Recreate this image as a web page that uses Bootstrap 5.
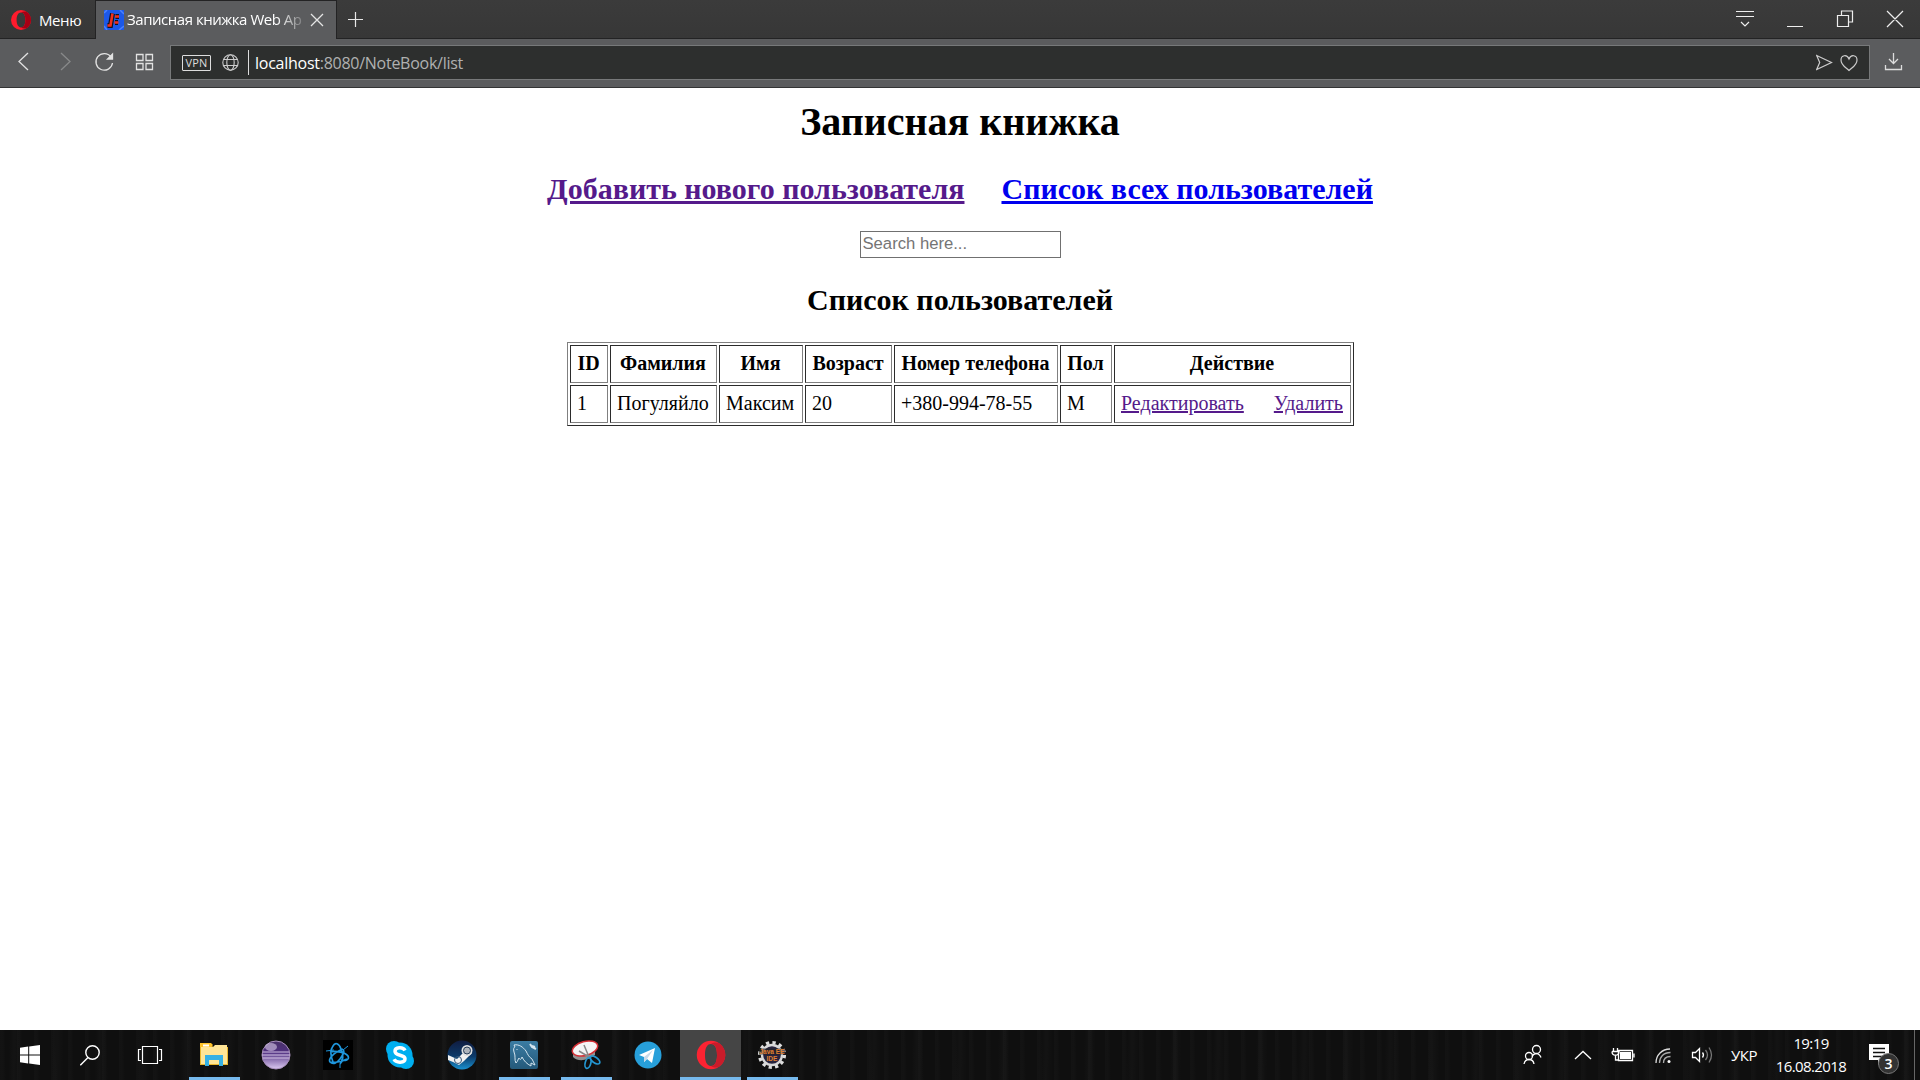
<!DOCTYPE html>
<html lang="ru">
<head>
<meta charset="utf-8">
<title>Записная книжка Web App</title>
<link href="https://cdn.jsdelivr.net/npm/bootstrap@5.3.0/dist/css/bootstrap.min.css" rel="stylesheet">
<style>
body{font-family:"Liberation Serif",serif;color:#000;background:#fff;font-size:20px;line-height:23px}
svg{display:block;flex:none}
.ui{font-family:"Open Sans",sans-serif}
.tabstrip{height:39px;background:linear-gradient(#3b3b3b,#373737);border-bottom:1px solid #232324}
.menu-btn{width:95px;padding-left:11px;color:#fff;font-size:15px}
.menu-btn span{margin:-2px 0 0 8px;letter-spacing:-.4px}
.tab-on{width:242px;background:#5b5c5e;border:1px solid #232324;border-bottom:0;padding-left:8px;color:#fff;font-size:15px;margin-bottom:-1px}
.tab-title{width:179px;margin:-2px 0 0 3px;letter-spacing:-.47px;white-space:nowrap;-webkit-mask-image:linear-gradient(90deg,#000 150px,transparent 182px);mask-image:linear-gradient(90deg,#000 150px,transparent 182px)}
.toolbar{height:49px;background:#5b5c5e;border-bottom:1px solid #333435}
.address{height:35px;margin:6px 0 0 24px;width:1700px;background:#2d2f2e;border:1px solid #77797a;padding-left:11px}
.vpn{width:29px;height:16px;border:1px solid #ddd;border-radius:1px;font-size:11px;line-height:14px;color:#ddd;text-align:center;letter-spacing:.2px}
.caret{width:1px;height:25px;background:#ddd;margin:0 6px 0 9px}
.url{font-size:16px;color:#b0b1b1;letter-spacing:-.26px;white-space:nowrap;padding-top:2px}
.url b{font-weight:400;color:#fff}
main{height:942px;padding-top:11px}
h1{font-size:40px;line-height:46px;font-weight:700;margin:0 0 27px}
h2{font-size:30px;line-height:34px;font-weight:700;margin:0}
.nav-links{gap:37px}
a.seen{color:#551a8b}a.fresh{color:#00e}
.search-field{width:201px;height:27px;border:1px solid #707070;margin:25px auto;padding:0 0 1px 2px;font:16.67px "Liberation Sans",sans-serif;display:block;border-radius:0}
.search-field::placeholder{color:#757575;opacity:1}
.people{width:787px;margin-top:25px;border:1px solid;border-color:#808080 #2b2b2b #2b2b2b #808080;border-collapse:separate;border-spacing:2px;table-layout:fixed;text-align:left}
.people th,.people td{height:38px;padding:0 0 1px 6.500px;border:1px solid;border-color:#2b2b2b #808080 #808080 #2b2b2b;white-space:nowrap;vertical-align:middle}
.people th{padding:0 0 1px;text-align:center}
.people td a+a{margin-left:30px}
.taskbar{height:50px;color:#fff;background-color:#0f0f0f;background-image:repeating-linear-gradient(90.500deg,transparent 0 9px,rgba(255,255,255,.02) 14px,transparent 21px 43px),repeating-linear-gradient(89.500deg,rgba(255,255,255,.015) 0 3px,transparent 6px 17px)}
.sys{width:60px}.app{width:62px;height:50px;position:relative}
.run::after{content:"";position:absolute;bottom:0;left:6px;width:51px;height:3px;background:#76b9ed}
.active-app{background:#454545;width:61px;margin-left:1px}
.active-app::after{left:0;width:61px}
.tray{position:relative}
.clock{font-size:15px;line-height:23px;letter-spacing:-.6px;width:74px;text-align:center}
.count{position:absolute;left:9px;top:9px;width:21px;height:21px;border-radius:50%;border:1px solid #777;background:#333;font-size:14px;font-weight:600;line-height:19px;text-align:center}
</style>
<script src="https://cdn.jsdelivr.net/npm/bootstrap@5.3.0/dist/js/bootstrap.bundle.min.js"></script>
</head>
<body class="overflow-hidden">
<header class="ui">
<div class="tabstrip d-flex">
 <div class="menu-btn d-flex align-items-center pt-1"><svg style="margin-top:-2px" width="20" height="20" viewBox="0 0 20 20"><path fill="#ff1b2d" fill-rule="evenodd" d="M10 0a10 10 0 1 0 0 20 10 10 0 0 0 0-20m0 2.600c3 0 4.400 3.400 4.400 7.400S13 17.400 10 17.400 5.600 14 5.600 10 7 2.600 10 2.600"/><path fill="#a70014" d="M10 2.600c2-1.300 4-1.300 6-.6a10 10 0 0 1 0 16c-2 .8-4 .7-6-.6 3 0 4.400-3.400 4.400-7.400S13 2.600 10 2.600"/></svg><span>Меню</span></div>
 <div class="tab-on d-flex align-items-center">
  <svg width="20" height="20" style="margin-top:-1px"><path fill="#1c58e8" d="M0 0h20v20H0z"/><path d="M0 3l3-3M0 16l3 4M16 0l4 4M15 20l5-4" stroke="#4b82ff" stroke-width="1.500"/><path d="M8.500 3.500 6.500 15.500H3.500M11.500 6.500H15M11 12.500h3" fill="none" stroke="#10131f" stroke-width="5"/><path d="M8.500 3.500 6.500 15.500H3.500" fill="none" stroke="#f2301c" stroke-width="2.600"/><path d="M11 6.500h4M10.500 12.500h4" stroke="#f2301c" stroke-width="2.600"/></svg>
  <div class="tab-title">Записная книжка Web Ap</div>
  <svg class="ms-1" style="margin-top:-1px" width="14" height="14" stroke="#e5e5e5" stroke-width="1.300"><path d="M1 1l12 12M13 1 1 13"/></svg>
 </div>
 <svg class="ms-2 mt-2" width="30" height="24" stroke="#e8e8e8" stroke-width="1.200"><path d="M10.500 4v15M3 11.500h15"/></svg>
 <svg class="ms-auto" width="190" height="38" fill="none" stroke="#eee" stroke-width="1.200"><path d="M6 11.500h18M6 16.500h18M11 22l4 4 4-4M57 26.500h16M107.500 15.500h11v11h-11zM111.500 15v-4h11v11h-4M157 11l16 16M173 11l-16 16"/></svg>
</div>
<div class="toolbar d-flex">
 <svg width="146" height="48" class="overflow-visible" fill="none" stroke="#e2e2e2" stroke-width="1.300"><path d="M28 14l-9 8.500 9 8.500"/><path stroke="#88898a" d="M61 14l9 8.500-9 8.500"/><path d="M111 18a8.300 8.300 0 1 0 1.500 6"/><path fill="#e2e2e2" d="M112.500 15v5h-5z"/><path d="M136.500 15.500h6.500v6h-6.500zM146 15.500h6.500v6H146zM136.500 24.500h6.500v6h-6.500zM146 24.500h6.500v6H146z"/></svg>
 <div class="address d-flex align-items-center">
  <div class="vpn">VPN</div>
  <svg style="margin-left:11px" width="17" height="17" fill="none" stroke="#ccc" stroke-width="1.100"><circle cx="8.500" cy="8.500" r="7.700"/><ellipse cx="8.500" cy="8.500" rx="3.700" ry="7.700"/><path d="M1.500 5.500h14M1.500 11.500h14"/></svg>
  <div class="caret"></div><div class="url"><b>localhost</b>:8080/NoteBook/list</div>
  <svg class="ms-auto" width="53" height="33" fill="none" stroke="#ccc" stroke-width="1.200"><path d="M.7 9.500 15.500 16.500 .7 23.500l3-7zM33 24.500c-3-3-8-5-8-10.500 0-5 6-6 8-1 2-5 8-4 8 1 0 5.500-5 7.500-8 10.500z"/></svg>
 </div>
 <svg width="49" height="48" fill="none" stroke="#ddd" stroke-width="1.300"><path d="M23.500 14v10M19 20l4.500 4.500L28 20M15.500 26v4.500h16V26"/></svg>
</div>
</header>
<main class="text-center">
 <h1>Записная книжка</h1>
 <h2 class="nav-links d-flex justify-content-center"><a class="seen" href="#">Добавить нового пользователя</a><a class="fresh" href="#">Список всех пользователей</a></h2>
 <input class="search-field" type="text" placeholder="Search here...">
 <h2>Список пользователей</h2>
 <table class="people mx-auto">
  <colgroup><col style="width:38px"><col style="width:107px"><col style="width:84px"><col style="width:87px"><col style="width:164px"><col style="width:52px"><col style="width:237px"></colgroup>
  <thead><tr><th>ID</th><th>Фамилия</th><th>Имя</th><th>Возраст</th><th>Номер телефона</th><th>Пол</th><th>Действие</th></tr></thead>
  <tbody><tr><td>1</td><td>Погуляйло</td><td>Максим</td><td>20</td><td>+380-994-78-55</td><td>М</td><td><a class="seen" href="#">Редактировать</a><a class="seen" href="#">Удалить</a></td></tr></tbody>
 </table>
</main>
<footer class="taskbar ui d-flex align-items-center">
 <div class="sys d-flex justify-content-center"><svg width="20" height="20" fill="#fff"><path d="M0 2.800 8.200 1.600V9.500H0zM9.200 1.400 20 0v9.500H9.200zM0 10.500h8.200v8L0 17.300zM9.200 10.500H20V20L9.200 18.600z"/></svg></div>
 <div class="sys d-flex justify-content-center"><svg width="21" height="21" fill="none" stroke="#fff" stroke-width="1.400"><circle cx="12.500" cy="7.500" r="6.700"/><path d="M8 12.500.3 20.300"/></svg></div>
 <div class="sys d-flex justify-content-center"><svg width="26" height="20" fill="none" stroke="#fff" stroke-width="1.200"><path d="M5.500 1.500h15v17h-15zM4 4.500H1.500v11H4M22 4.500h2.500v11H22"/></svg></div>
 <div class="app run d-flex align-items-center justify-content-center" style="margin-left:3px"><svg width="28" height="24"><path fill="#e9b72d" d="M0 1h11l2 3h15v18H0z"/><path fill="#ffe596" d="M1 4h12l2-2h12v19H1z"/><path fill="#ffc329" d="M0 0h11l2 2-2 2H0z"/><path fill="#fff" d="M3 1.500h6v2H3z"/><path fill="#36b1e5" d="M5 23V12h18v11h-4v-6H9v6z"/></svg></div>
 <div class="app d-flex align-items-center justify-content-center"><svg width="30" height="30"><defs><linearGradient id="eg" x2="0" y2="1"><stop stop-color="#4a3268"/><stop offset=".4" stop-color="#503080"/><stop offset="1" stop-color="#dbc9f1"/></linearGradient></defs><circle cx="15" cy="15" r="14" fill="url(#eg)" stroke="#a990bd"/><path d="M2 12h26M1 15h28M2 18h26" stroke="#d4c3e6" stroke-width="1"/><ellipse cx="10" cy="7" rx="6" ry="4" fill="#dacbea" opacity=".6"/></svg></div>
 <div class="app d-flex align-items-center justify-content-center"><svg width="30" height="30"><path d="M0 0h30v30H0z" fill="#000"/><g fill="none" stroke="#1e96dd" stroke-width="1.700"><path d="M10 6c2-4 6-3 8 3 3 6 2 12-1 15M10 6c-3 4-2 11 0 16M7 12c6-2 16 1 18 4 2 4-3 5-7 4M7 22c3 3 7 1 10-3s5-8 3-9M7 22c-2-3 3-9 13-13M7 22c5 1 10 1 17-3"/><path d="M3 11l8-1M25 6l-5 4M17 24v4" stroke-width="1"/></g></svg></div>
 <div class="app d-flex align-items-center justify-content-center"><svg width="30" height="30"><circle cx="15" cy="15" r="12.500" fill="#00aff0"/><circle cx="9" cy="9" r="8" fill="#00aff0"/><circle cx="21" cy="21" r="8" fill="#00aff0"/><path d="M20 10.500c-2-4-10-3.500-10 .8 0 5.200 10 2.700 10 7.500 0 4.400-9 4.400-11 .5" fill="none" stroke="#fff" stroke-width="3.500"/></svg></div>
 <div class="app d-flex align-items-center justify-content-center"><svg width="30" height="30"><defs><linearGradient id="sg" x2="0" y2="1"><stop stop-color="#101c40"/><stop offset=".55" stop-color="#0c3a69"/><stop offset="1" stop-color="#1a91d0"/></linearGradient></defs><circle cx="15" cy="15" r="14.500" fill="url(#sg)"/><path d="M1 15l9 4 5-5 6-2 4 1-8 8-5 4-6-3-5-2z" fill="#f1f1f1"/><circle cx="20" cy="10.500" r="5.500" fill="#e0e0e0"/><circle cx="20" cy="10.500" r="3.500" fill="#adb3bb" stroke="#263d59"/><circle cx="11" cy="20" r="3.500" fill="none" stroke="#38587a"/></svg></div>
 <div class="app run d-flex align-items-center justify-content-center"><svg width="29" height="29" fill="none" stroke="#d4e5ef"><defs><linearGradient id="mg" x2="0" y2="1"><stop stop-color="#3b7ca3"/><stop offset="1" stop-color="#24597a"/></linearGradient></defs><rect width="28" height="28" rx="2" fill="url(#mg)" stroke="none"/><path d="M6 22c-2-3 0-7-2-11-1-3 0-5 1-5l-1-2c5-1 9 2 12 6 2 4 3 6 6 8l3 6-4-2v3c-4-2-7-5-9-9-1 3-2 3-3 1-1 1-1 3-3 5M7 8v1"/><path d="M20 3l2 3 4 2M22 5l3 1" stroke-width="2"/></svg></div>
 <div class="app run d-flex align-items-center justify-content-center"><svg width="30" height="30"><path d="M2 11v6c5 5 14 4 22-2v-6z" fill="#929292"/><ellipse cx="14" cy="8.500" rx="13" ry="7" transform="rotate(-15 14 8.500)" fill="#f5f5f5" stroke="#d53036" stroke-width="1.500"/><path d="M13 5l5 12M8 11l10 6" stroke="#888" stroke-width="1.500"/><g fill="none" stroke="#2497d2" stroke-width="1.700"><ellipse cx="17" cy="23" rx="2.800" ry="5.500" transform="rotate(15 17 23)"/><ellipse cx="24" cy="20" rx="2.800" ry="5.500" transform="rotate(-55 24 20)"/></g></svg></div>
 <div class="app d-flex align-items-center justify-content-center"><svg width="28" height="28"><circle cx="14" cy="14" r="13.500" fill="#279fda"/><path d="M5 14 21 7l-3 15-5-4-3 3v-5z" fill="#fff"/><path d="m10 16 9-7-6 9-3 3" fill="#c8daea"/></svg></div>
 <div class="app run active-app d-flex align-items-center justify-content-center"><svg width="30" height="30" viewBox="0 0 20 20"><path fill="#fb2332" fill-rule="evenodd" d="M10 .5a9.500 9.500 0 1 0 0 19 9.500 9.500 0 0 0 0-19m0 2.200c3 0 4 3.300 4 7.300s-1 7.300-4 7.300S6 14 6 10s1-7.300 4-7.300"/><path fill="#c91c2a" d="M10 2.700c2-1.300 4-1.200 5.500-.5a9.500 9.500 0 0 1 0 15.600c-1.500.7-3.500.8-5.500-.5 3 0 4-3.300 4-7.300s-1-7.300-4-7.300"/></svg></div>
 <div class="app run d-flex align-items-center justify-content-center"><svg class="overflow-visible" width="30" height="30"><circle cx="15" cy="15" r="12.400" fill="none" stroke="#dedede" stroke-width="3.300" stroke-dasharray="3.250 3.250"/><circle cx="15" cy="15" r="10" fill="#27233d" stroke="#d8d8d8" stroke-width="2.300"/><g fill="#e18032" font-family="Liberation Sans, sans-serif" font-size="7.500" font-weight="bold" text-anchor="middle"><path d="M2 8.500h26v6H2z" fill="#222" opacity=".65"/><text x="15" y="14" textLength="25" lengthAdjust="spacingAndGlyphs">Java EE</text><text x="15" y="21" textLength="11" lengthAdjust="spacingAndGlyphs">IDE</text></g></svg></div>
 <svg class="ms-auto" width="195" height="50" fill="none" stroke="#fff" stroke-width="1.300"><g transform="translate(1)"><circle cx="13.500" cy="19.500" r="4"/><path d="M9 26.500c2-4 7-4 9 1"/><circle cx="6" cy="26" r="3.500"/><path d="M1 34c1-6 9-6 10 0"/></g><path d="m53 29 8-7.500 8 7.500"/><path d="M96.500 20.500h14v10h-14zM112 23.500v4"/><path fill="#fff" stroke="none" d="M98 22h11v7H98z"/><path d="M91.500 18v3M95.500 18v3M90 21.500h7c0 5-7 5-7 0M93.500 25v5h3"/><path stroke="#aaa" d="M137.500 33c0-6 4-10.500 11-10.500M141.500 33c0-4 2-6.500 7-6.500"/><path stroke="#ddd" d="M134 33c0-8 6-14 14-14"/><circle cx="147" cy="31.500" r="1.500" fill="#fff" stroke="none"/><path d="M170.500 22.500h3l4-4v13l-4-4h-3zM180.500 22.500q2 2.500 0 5"/><path stroke="#777" d="M183.500 20q4 5 0 10M187 17.500q5 7.500 0 15"/></svg>
 <div style="font-size:15px;width:28px;margin-left:14px;letter-spacing:-.5px">УКР</div>
 <div class="clock" style="margin-left:15px">19:19<br>16.08.2018</div>
 <div class="tray" style="margin-left:21px;width:45px"><svg width="21" height="23"><path fill="#fff" d="M0 0h20v16h-7l-4 5v-5H0z"/><path stroke="#111" stroke-width="1.300" d="M4 4.500h12M4 8.500h12M4 12.500h9"/></svg><div class="count">3</div></div>
 <div style="width:6px;height:50px;border-left:1px solid #666"></div>
</footer>
</body>
</html>
